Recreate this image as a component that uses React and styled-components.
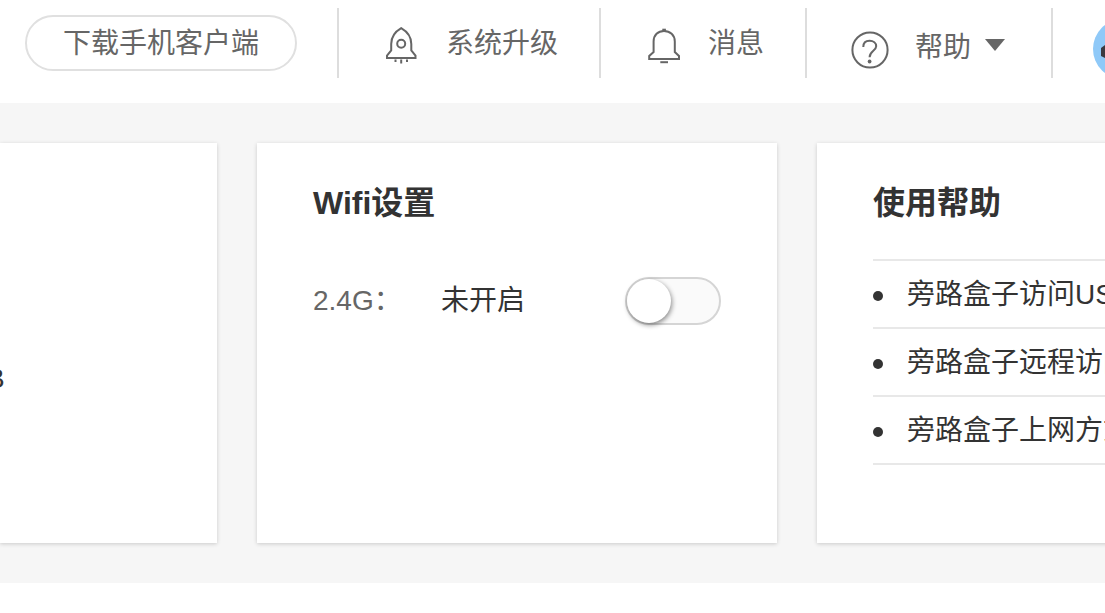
import styled, { createGlobalStyle } from 'styled-components'

const GUIDES = ['旁路盒子访问USB', '旁路盒子远程访问', '旁路盒子上网方式']

const App = () => {
  return (
    <>
      <GlobalStyle />
      <Header>
        <DownloadButton type="button">下载手机客户端</DownloadButton>
        <Nav>
          <NavItem>
            <NavLink href="#upgrade">
              <RocketIcon />
              系统升级
            </NavLink>
          </NavItem>
          <NavItem>
            <NavLink href="#message">
              <BellIcon />
              消息
            </NavLink>
          </NavItem>
          <NavItem>
            <HelpButton type="button">
              <QuestionIcon />
              帮助
              <Caret />
            </HelpButton>
          </NavItem>
          <NavItem>
            <AvatarLink href="#account" aria-label="account">
              <Avatar />
            </AvatarLink>
          </NavItem>
        </Nav>
      </Header>
      <Main>
        <StorageCard>
          <StorageUnit>B</StorageUnit>
        </StorageCard>
        <Card>
          <Title>Wifi设置</Title>
          <WifiRow>
            <WifiLabel htmlFor="wifi24">2.4G：</WifiLabel>
            <WifiStatus>未开启</WifiStatus>
            <Switch id="wifi24" type="checkbox" role="switch" />
          </WifiRow>
        </Card>
        <Card>
          <Title>使用帮助</Title>
          <GuideList>
            {GUIDES.map((guide) => (
              <GuideItem key={guide}>
                <GuideLink href="#guide">{guide}</GuideLink>
              </GuideItem>
            ))}
          </GuideList>
        </Card>
      </Main>
    </>
  )
}

const RocketIcon = () => (
  <Icon width="32" height="38" viewBox="1 0 32 38">
    <path d="M16.2 1.2C10.5 4.5 6.2 10.5 6.2 17V23.5L2 28.5V31H30.5V28.5L26.3 23.5V17C26.3 10.5 21.9 4.5 16.2 1.2Z" />
    <circle cx="16.2" cy="16.8" r="4" />
    <path d="M10.5 32.5V35M16.2 32.5V36.5M22 32.5V35" />
  </Icon>
)

const BellIcon = () => (
  <Icon width="32" height="38" viewBox="0 0 32 38">
    <path d="M5.6 25V14.5C5.6 8 10 4 16 4S26.8 8 26.8 14.5V25L31 29V32H1.2V29Z" />
    <path d="M14.3 3.2H17.9" strokeWidth="3" />
    <path d="M12.3 35.2H20" />
  </Icon>
)

const QuestionIcon = () => (
  <Icon width="38" height="38" viewBox="0 0 38 38">
    <circle cx="19" cy="19" r="17.6" />
    <path d="M12.3 16C12.3 12 14.9 9.8 18.6 9.8S25.2 12 25.2 15.3C25.2 19.6 18.6 20.2 18.6 26.2" />
    <circle cx="18.6" cy="30.5" r="1.9" fill="currentColor" stroke="none" />
  </Icon>
)

const Caret = () => (
  <CaretShape width="20" height="14" viewBox="0 0 20 14">
    <path d="M0 1H20L10 13Z" fill="currentColor" />
  </CaretShape>
)

const Avatar = () => (
  <svg width="60" height="60" viewBox="0 0 60 60">
    <circle cx="30" cy="30" r="30" fill="#8fc9f8" />
    <path d="M8 29L12 26H48L52 29V37L48 39H12L8 37Z" fill="#3a3a40" />
  </svg>
)

const GlobalStyle = createGlobalStyle`
  * {
    box-sizing: border-box;
  }

  body {
    margin: 0;
    overflow-x: hidden;
    background: #fff;
    color: #333;
    font-family: 'Liberation Sans', 'Noto Sans CJK SC', sans-serif;
    font-size: 28px;
    line-height: 40px;
  }
`

const Header = styled.header`
  display: flex;
  align-items: flex-start;
  height: 103px;
  padding: 8px 0 0 25px;
  overflow: hidden;
  color: #666;
  white-space: nowrap;
`

const Button = styled.button`
  border: 0;
  background: none;
  color: inherit;
  font: inherit;
  cursor: pointer;
`

const DownloadButton = styled(Button)`
  flex: none;
  width: 272px;
  height: 56px;
  margin: 7px 40px 0 0;
  padding: 2px 0 0;
  border: 2px solid #e0e0e0;
  border-radius: 28px;
`

const Nav = styled.nav`
  display: flex;
  flex: none;
`

const NavItem = styled.div`
  display: flex;
  align-items: center;
  height: 70px;
  border-left: 2px solid #ddd;
`

const NavLink = styled.a`
  display: flex;
  align-items: center;
  gap: 28px;
  height: 70px;
  padding: 2px 41px 0 47px;
  color: inherit;
  text-decoration: none;
`

const HelpButton = styled(Button)`
  display: flex;
  align-items: center;
  gap: 26px;
  height: 70px;
  padding: 10px 46px 0 44px;
`

const AvatarLink = styled.a`
  display: flex;
  padding: 12px 0 0 40px;
`

const Icon = styled.svg`
  flex: none;
  margin-top: 4px;
  fill: none;
  stroke: currentColor;
  stroke-width: 2;
`

const CaretShape = styled.svg`
  flex: none;
  margin: 0 0 6px -12px;
`

const Main = styled.main`
  display: flex;
  gap: 40px;
  padding: 40px 0;
  overflow: hidden;
  background: #f6f6f6;
`

const Card = styled.section`
  flex: 0 0 520px;
  min-height: 400px;
  padding: 40px 56px;
  background: #fff;
  box-shadow: 0 1px 4px rgba(0, 0, 0, 0.18);
`

const StorageCard = styled(Card)`
  flex-basis: 217px;
  padding: 216px 0 0;
`

const StorageUnit = styled.span`
  display: block;
  margin-left: -14px;
`

const Title = styled.h2`
  margin: 0;
  font-size: 32px;
  font-weight: bold;
  line-height: 40px;
`

const WifiRow = styled.div`
  display: flex;
  align-items: center;
  margin-top: 54px;
`

const WifiLabel = styled.label`
  width: 128px;
  color: #666;
`

const WifiStatus = styled.span`
  flex: 1;
`

const Switch = styled.input`
  appearance: none;
  width: 96px;
  height: 48px;
  margin: 0;
  border: 2px solid #d5d5d5;
  border-radius: 24px;
  background: #fafafa;
  cursor: pointer;

  &::before {
    content: '';
    display: block;
    width: 44px;
    height: 44px;
    border-radius: 50%;
    background: #fff;
    box-shadow: 1px 2px 5px rgba(0, 0, 0, 0.45);
  }

  &:checked {
    background: #8fc9f8;
  }

  &:checked::before {
    margin-left: auto;
  }
`

const GuideList = styled.ul`
  margin: 36px 0 0;
  padding: 0;
  border-top: 2px solid #e8e8e8;
  list-style: none;
`

const GuideItem = styled.li`
  display: flex;
  align-items: center;
  height: 68px;
  padding-top: 2px;
  border-bottom: 2px solid #e8e8e8;
  white-space: nowrap;

  &::before {
    content: '';
    width: 10px;
    height: 10px;
    margin: 2px 24px 0 0;
    border-radius: 50%;
    background: #333;
  }
`

const GuideLink = styled.a`
  color: #333;
  text-decoration: none;
`

export default App
